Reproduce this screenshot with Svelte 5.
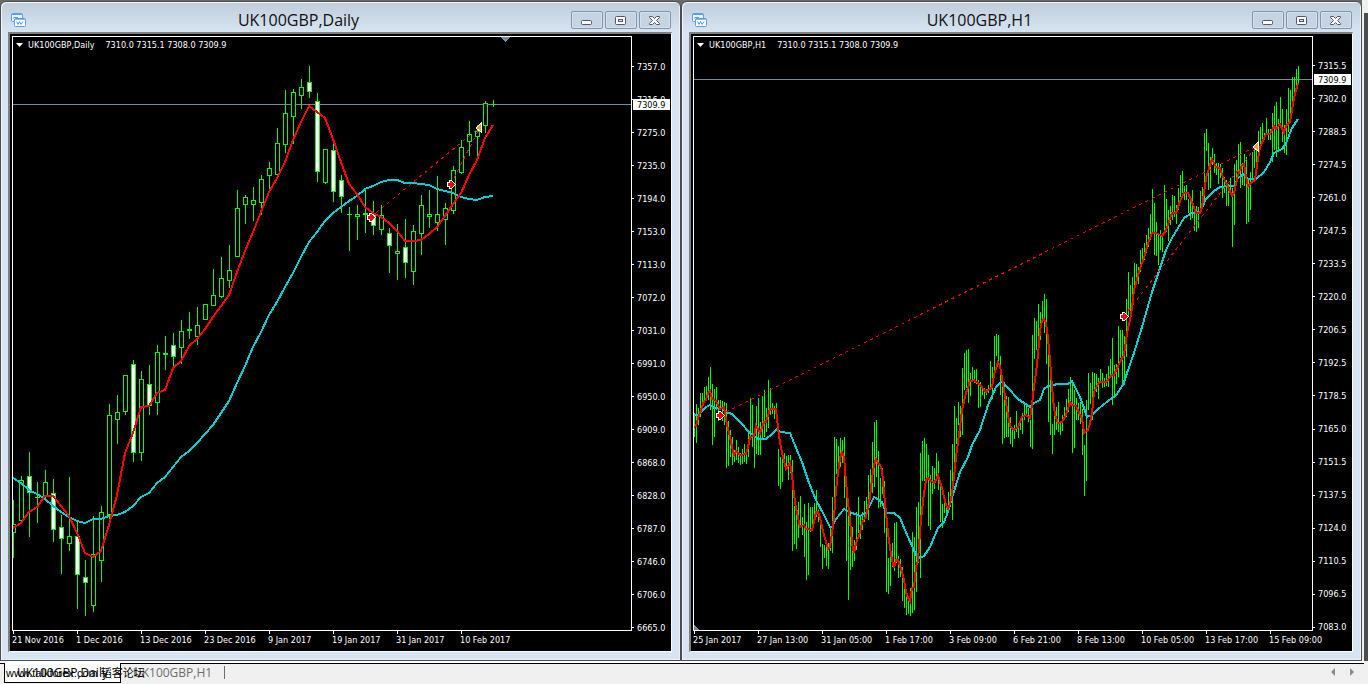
<script>
  // candles: high, body top, body bottom, low, kind (u = hollow, d = filled, x = doji)
  const daily = `500 524 532 558 u,476 480 520 522 u,452 476 492 537 d,482 497 497 523 x,470 482 496 498 u,
    479 493 529 542 d,515 527 538 574 d,477 536 543 551 u,522 536 574 609 d,560 577 582 616 d,
    516 554 605 612 u,506 512 560 582 u,404 415 514 520 u,395 412 419 444 u,375 375 411 415 u,
    360 364 452 462 d,371 379 452 461 u,365 384 405 415 d,345 352 402 415 u,336 353 354 370 x,
    333 345 356 368 d,320 331 347 364 u,312 329 330 339 x,307 325 336 345 u,304 304 319 320 u,
    269 295 305 306 u,257 278 296 298 u,245 270 280 288 u,190 208 256 257 u,195 197 204 224 u,
    187 200 204 221 u,175 179 202 215 u,162 168 175 190 u,128 143 174 175 u,90 113 144 153 u,
    89 92 116 144 u,79 87 95 109 u,66 82 91 98 d,93 101 171 182 d,149 149 182 184 u,
    144 150 191 202 d,175 180 196 213 d,207 214 214 251 x,205 214 216 240 u,190 213 214 233 x,
    201 213 225 235 d,205 215 229 235 u,228 233 245 273 d,224 251 253 280 u,219 247 262 278 d,
    225 231 271 285 u,195 205 233 255 u,190 214 216 228 u,176 214 222 231 u,203 208 219 245 u,
    166 170 210 214 u,140 147 172 174 u,121 134 141 156 u,125 131 136 156 u,101 103 125 133 u,
    100 104 104 107 x`
    .split(',')
    .map((row, i) => {
      const [high, top, bottom, low, kind] = row.trim().split(' ');
      return { x: 13 + i * 8, high: +high, top: +top, bottom: +bottom, low: +low, kind };
    });

  const dailyFast = [
    528, 523, 512, 507, 496, 496, 506, 516, 533, 553, 557, 551, 525, 495, 453, 433, 407, 406, 393, 390, 368,
    361, 346, 339, 329, 317, 306, 295, 272, 251, 232, 212, 192, 178, 162, 140, 122, 106, 112, 118, 139, 162,
    184, 194, 207, 213, 217, 223, 231, 241, 241, 240, 234, 227, 216, 204, 193, 175, 160, 138, 125
  ];
  const dailySlow = [
    478, 483, 490, 494, 499, 506, 512, 517, 521, 523, 519, 519, 516, 515, 512, 506, 497, 493, 483, 477, 467,
    457, 451, 443, 434, 425, 413, 401, 383, 366, 347, 332, 315, 302, 287, 273, 257, 242, 232, 221, 213, 207,
    201, 196, 189, 186, 182, 180, 180, 183, 183, 184, 185, 189, 191, 193, 197, 199, 200, 197, 196
  ];

  // hourly bars: high-low, one every two pixels
  const hourly = `413-437 404-443 408-425 393-417 393-408 387-403 386-400 377-400 367-410 384-445 389-437 387-410
    400-421 400-410 401-421 402-425 403-468 421-466 430-457 437-465 450-462 440-460 447-463 453-465 449-464
    444-462 453-464 430-457 398-437 405-447 428-468 406-454 398-455 422-455 396-438 390-437 408-432 380-428
    388-415 403-414 406-419 403-422 449-486 457-489 459-482 453-467 456-467 455-480 455-473 460-551 506-544
    507-549 502-538 496-527 517-535 504-557 522-580 503-575 507-532 507-528 503-523 490-517 510-522 517-547
    544-569 545-558 543-566 543-569 527-551 497-553 437-523 439-474 446-468 438-467 440-463 437-498 490-561
    500-600 512-570 527-567 540-561 512-550 497-533 515-539 512-530 501-522 497-518 475-520 469-493 442-493
    422-487 420-477 451-508 478-507 468-494 481-533 510-592 558-594 550-586 543-567 523-571 522-563 556-578
    559-577 567-601 580-608 597-615 597-614 588-616 532-613 537-610 507-592 502-563 453-578 441-481 438-481
    444-483 455-526 475-530 466-494 468-489 453-480 461-490 480-522 504-528 503-513 503-513 492-510 470-507
    444-520 406-466 418-444 402-425 406-437 368-435 353-390 350-388 349-403 373-396 367-382 370-383 369-384
    380-408 382-407 386-395 388-399 389-395 385-393 361-390 367-399 336-377 334-356 335-362 356-395 385-444
    385-438 396-437 397-437 417-444 427-447 425-439 411-432 423-438 420-430 413-434 405-420 404-417 408-422
    413-447 335-449 318-359 321-350 304-353 312-340 301-323 294-333 299-364 354-422 370-435 424-454 415-435
    407-430 402-432 423-435 415-431 407-420 399-417 389-412 377-405 381-453 390-448 398-420 403-420 402-424
    409-455 445-496 400-481 373-410 383-404 372-420 373-395 374-392 378-399 369-383 373-388 378-387 374-386
    366-387 359-378 338-405 365-398 364-384 326-377 330-358 330-383 336-385 299-357 272-317 285-312 277-300
    263-290 264-285 267-284 250-272 248-263 243-260 235-253 228-247 214-240 189-234 203-255 222-256 233-265
    230-250 233-252 185-233 199-232 210-241 206-225 195-220 196-217 205-224 188-210 175-197 171-193 186-200
    185-200 199-213 200-220 190-218 210-231 206-232 207-228 191-213 187-205 133-200 129-151 143-190 157-188
    148-165 154-173 163-175 163-184 164-178 168-198 177-193 180-206 184-206 178-193 188-247 164-225 160-183
    144-177 142-188 163-185 154-186 157-224 180-222 172-210 152-182 150-168 145-163 131-160 127-150 123-142
    133-140 118-135 129-140 129-140 113-162 106-150 102-157 119-150 97-125 109-142 125-153 109-155 88-132
    90-122 77-108 77-93 69-85 66-85`
    .trim()
    .split(/\s+/)
    .map((pair, i) => {
      const [high, low] = pair.split('-').map(Number);
      return { x: 694 + i * 2, high, low };
    });

  const hourlyFast = `694,427 696,426 698,418 700,413 702,407 704,401 706,400 708,393 710,391 712,399 716,401 720,409
    724,407 726,420 728,429 730,437 732,447 734,455 736,451 740,455 746,454 748,447 750,437 754,436 756,426
    758,429 760,433 764,422 766,422 770,409 776,409 778,428 780,442 782,453 786,469 790,463 792,475 794,495
    796,508 800,527 804,525 806,529 812,530 814,522 816,512 818,512 820,518 824,535 828,549 830,547 832,533
    834,517 836,490 838,473 840,458 842,452 844,457 846,482 848,503 850,520 852,543 854,553 856,543 860,533
    862,522 866,517 868,507 870,497 872,478 874,465 876,459 878,463 880,465 882,470 884,493 886,513 888,533
    890,548 892,560 894,568 896,560 898,560 902,572 904,580 906,592 908,598 910,601 912,588 914,587 916,567
    918,560 920,532 922,510 924,493 926,480 928,478 930,480 934,483 936,480 938,475 940,482 942,488 944,497
    946,505 948,509 950,504 952,493 954,477 956,457 958,442 960,428 962,410 966,393 968,388 970,380 972,381
    974,380 980,385 986,392 992,387 994,375 998,362 1000,366 1004,390 1008,415 1010,426 1014,430 1018,427
    1022,417 1026,415 1030,418 1032,405 1034,387 1036,372 1038,355 1040,330 1042,321 1044,319 1046,323
    1048,338 1050,360 1052,387 1054,408 1056,418 1058,423 1062,422 1066,415 1070,402 1072,405 1076,406
    1080,415 1082,418 1084,433 1088,430 1090,423 1092,413 1094,392 1098,384 1100,382 1106,382 1112,375
    1114,375 1120,362 1124,355 1126,340 1128,328 1130,320 1132,308 1134,290 1136,283 1140,268 1144,258
    1148,243 1152,233 1156,233 1162,236 1166,230 1172,213 1176,213 1180,201 1184,193 1188,193 1192,202
    1196,213 1200,213 1202,207 1204,193 1206,178 1210,165 1212,159 1216,167 1220,168 1222,175 1228,187
    1232,196 1234,193 1238,175 1242,165 1244,164 1246,177 1248,186 1252,182 1255,180 1257,165 1260,147
    1266,134 1270,134 1274,126 1276,129 1280,124 1284,133 1286,126 1290,122 1294,98 1298,83`;
  const hourlySlow = `694,415 698,415 706,407 710,405 714,408 718,408 722,408 726,412 732,414 740,422 750,433 758,439
    766,439 772,434 777,429 780,432 790,433 794,443 802,462 808,480 816,500 824,515 830,527 832,527 836,519
    844,509 852,513 860,516 866,513 874,497 882,502 886,513 894,513 900,518 908,537 916,555 920,558 924,556
    930,547 938,528 944,522 948,512 952,498 960,472 968,457 972,445 980,430 988,405 996,387 1002,381
    1008,388 1018,399 1030,407 1034,403 1040,400 1044,389 1048,386 1058,384 1068,384 1072,381 1080,397
    1084,408 1087,417 1092,415 1098,409 1108,401 1116,395 1123,385 1127,373 1134,353 1142,327 1152,292
    1160,268 1166,250 1172,238 1178,228 1184,218 1192,213 1200,212 1206,199 1214,191 1220,187 1228,186
    1234,186 1238,178 1244,174 1248,179 1256,179 1264,172 1270,162 1274,153 1282,149 1286,143 1292,128
    1298,119`;

  const toPoints = (ys) => ys.map((y, i) => `${13 + i * 8},${y}`).join(' ');

  const quotes = '7310.0 7315.1 7308.0 7309.9';

  const charts = [
    {
      id: 'daily',
      symbol: 'UK100GBP,Daily',
      left: 13,
      priceY: 104,
      fast: toPoints(dailyFast),
      slow: toPoints(dailySlow),
      trades: [
        [371, 217, 480, 127],
        [451, 184, 480, 127]
      ],
      prices: ['7357.0', '7316.0', '7275.0', '7235.0', '7194.0', '7153.0', '7113.0', '7072.0', '7031.0', '6991.0',
        '6950.0', '6909.0', '6868.0', '6828.0', '6787.0', '6746.0', '6706.0', '6665.0'],
      times: ['21 Nov 2016', '1 Dec 2016', '13 Dec 2016', '23 Dec 2016', '9 Jan 2017', '19 Jan 2017', '31 Jan 2017',
        '10 Feb 2017']
    },
    {
      id: 'hourly',
      symbol: 'UK100GBP,H1',
      left: 694,
      priceY: 79,
      fast: hourlyFast,
      slow: hourlySlow,
      trades: [
        [720, 415, 1257, 146],
        [1124, 316, 1257, 146]
      ],
      prices: ['7315.5', '7302.0', '7288.5', '7274.5', '7261.0', '7247.5', '7233.5', '7220.0', '7206.5', '7192.5',
        '7178.5', '7165.0', '7151.5', '7137.5', '7124.0', '7110.5', '7096.5', '7083.0'],
      times: ['25 Jan 2017', '27 Jan 13:00', '31 Jan 05:00', '1 Feb 17:00', '3 Feb 09:00', '6 Feb 21:00',
        '8 Feb 13:00', '10 Feb 05:00', '13 Feb 17:00', '15 Feb 09:00']
    }
  ];
</script>

<div class="terminal">
  <main class="workspace">
    {#each charts as chart}
      <section class="window">
        <header class="titlebar">
          <svg class="app-icon" width="15" height="15" viewBox="0 0 15 15" aria-hidden="true">
            <rect x="0.5" y="0.5" width="11" height="8" rx="1" fill="#eef5fd" stroke="#5b9be8" />
            <path d="M1 1.500h10" stroke="#5b9be8" />
            <path d="M2 5h1l1-1 1 1 1-1 1 1" fill="none" stroke="#5b9be8" />
            <rect x="3.500" y="5.500" width="11" height="8" rx="1" fill="#fff" stroke="#5b9be8" />
            <path d="M4 6.500h10" stroke="#8bb9ef" />
            <path d="M5.500 8.500l1.500 3 1.500-3 1.500 3 2-3" fill="none" stroke="#5b9be8" />
          </svg>
          <h1>{chart.symbol}</h1>
          <div class="controls">
            <button type="button" aria-label="Minimize">
              <svg width="13" height="11" viewBox="0 0 13 11">
                <rect x="1.500" y="5.500" width="10" height="4" rx="1" fill="#fff" stroke="#53566b" />
              </svg>
            </button>
            <button type="button" aria-label="Restore">
              <svg width="13" height="11" viewBox="0 0 13 11">
                <rect x="1.500" y="1.500" width="10" height="8" rx="1" fill="#fff" stroke="#53566b" />
                <rect x="4.500" y="4.500" width="4" height="2" fill="#dce6f1" stroke="#53566b" />
              </svg>
            </button>
            <button type="button" aria-label="Close">
              <svg width="13" height="11" viewBox="0 0 13 11">
                <path
                  d="M1.500 1.500h3l2 2 2-2h3v1l-3 3 3 3v1h-3l-2-2-2 2h-3v-1l3-3-3-3z"
                  fill="#fff"
                  stroke="#53566b"
                />
              </svg>
            </button>
          </div>
        </header>

        <div class="chart">
          <div class="plot">
            <p class="legend">
              <svg width="7" height="4" viewBox="0 0 7 4" aria-hidden="true"><path d="M0 0h7l-3.500 4z" fill="#fff" /></svg>
              <span>{chart.symbol}</span>
              <span class="quotes">{quotes}</span>
            </p>
            <svg class="canvas" viewBox="{chart.left} 37 618 593" preserveAspectRatio="none" role="img" aria-label={chart.symbol}>
              <rect x={chart.left} y={chart.priceY} width="618" height="1" fill="#778899" />
              {#if chart.id === 'daily'}
                <path d="M501 37h9l-4.500 5z" fill="#778899" />
                {#each daily as c}
                  <rect x={c.x} y={c.high} width="1" height={c.low - c.high} fill="#0f0" />
                  {#if c.kind === 'x'}
                    <rect x={c.x - 2} y={c.top} width="5" height={c.bottom - c.top + 1} fill="#0f0" />
                  {:else}
                    <rect
                      x={c.x - 1.5}
                      y={c.top + 0.5}
                      width="4"
                      height={c.bottom - c.top}
                      fill={c.kind === 'd' ? '#fff' : '#000'}
                      stroke="#0f0"
                    />
                  {/if}
                {/each}
              {:else}
                <path d="M694 625v5h5z" fill="#778899" />
                {#each hourly as bar}
                  <rect x={bar.x} y={bar.high} width="1" height={bar.low - bar.high} fill="#0f0" />
                {/each}
              {/if}
              <polyline class="average slow" points={chart.slow} />
              <polyline class="average fast" points={chart.fast} />
              {#each chart.trades as [x1, y1, x2, y2]}
                <line class="trade" {x1} {y1} {x2} {y2} />
                <path d="M{x1 - 4} {y1 - 2}h2v-2h2l5 4.500-5 4.500h-2v-2h-2z" fill="#fff" />
                <path d="M{x1 - 3} {y1 - 1}h2v-2h1l3.500 3.500-3.500 3.500h-1v-2h-2z" fill="#f00" />
                <path d="M{x2 - 4} {y2 + 1}l5-5v9z" fill="#daa520" stroke="#fff" stroke-width="1" />
              {/each}
            </svg>
          </div>
          <ul class="prices {chart.id}">
            {#each chart.prices as price}
              <li>{price}</li>
            {/each}
            <li class="current">7309.9</li>
          </ul>
          <ul class="times">
            {#each chart.times as time}
              <li>{time}</li>
            {/each}
          </ul>
        </div>
      </section>
    {/each}
    <div class="gutter"></div>
  </main>

  <nav class="tabs">
    <a class="tab active" href="#daily">UK100GBP,Daily</a>
    <a class="tab" href="#hourly">UK100GBP,H1</a>
    <span class="divider"></span>
    <span class="watermark">www.talkforex.com 韬客论坛</span>
    <div class="scroller">
      <button type="button" aria-label="Scroll tabs left">
        <svg width="4" height="8" viewBox="0 0 4 8"><path d="M4 0v8L0 4z" fill="#8a8a8a" /></svg>
      </button>
      <button type="button" aria-label="Scroll tabs right">
        <svg width="4" height="8" viewBox="0 0 4 8"><path d="M0 0v8l4-4z" fill="#8a8a8a" /></svg>
      </button>
    </div>
  </nav>
</div>

<style>
  :global(body) {
    margin: 0;
    background: #f0f0f0;
  }

  .terminal {
    display: flex;
    flex-direction: column;
    height: 100vh;
    min-height: 400px;
    overflow: hidden;
    font-family: 'Open Sans', 'Noto Sans CJK SC', sans-serif;
  }

  .workspace {
    flex: 1;
    min-height: 0;
    display: grid;
    grid-template-columns: 1fr 1fr 6px;
    background: #6b6b66;
  }

  .window {
    box-sizing: border-box;
    display: flex;
    flex-direction: column;
    min-width: 0;
    min-height: 0;
    margin-top: 1px;
    padding: 0 8px 8px 7px;
    border: 1px solid #4c4c50;
    border-radius: 6px 6px 0 0;
    background: linear-gradient(#bfcddb, #d7e4f2 30px);
    box-shadow: inset 1px 1px 0 #f2f7fc, inset -1px -1px 0 #e9f1f9;
  }

  .titlebar {
    display: flex;
    align-items: center;
    height: 30px;
    padding: 6px 1px 0 3px;
    box-sizing: border-box;
    flex: none;
  }

  .app-icon {
    flex: none;
  }

  h1 {
    flex: 1;
    margin: 0;
    text-align: center;
    font-size: 16px;
    line-height: 20px;
    font-weight: 400;
    color: #111;
  }

  .controls {
    display: flex;
    gap: 2px;
  }

  .controls button {
    display: flex;
    align-items: center;
    justify-content: center;
    width: 32px;
    height: 18px;
    padding: 0 2px 0 0;
    border: 1px solid #8492b0;
    border-radius: 2px;
    background: #c5d3e2;
    box-shadow: inset 0 0 0 1px #d6e1ec;
  }

  .chart {
    flex: 1;
    min-height: 0;
    display: grid;
    grid-template-columns: 1fr 39px;
    grid-template-rows: 1fr 20px;
    padding: 2px 0 0 2px;
    border: solid #fff;
    border-width: 2px 1px 1px 2px;
    border-top-color: #7f7f7f;
    border-left-color: #7f7f7f;
    background: #000;
    color: #fff;
    font-family: 'DejaVu Sans Condensed', 'DejaVu Sans', sans-serif;
    font-size: 9px;
    line-height: 12px;
  }

  .plot {
    position: relative;
    border: 1px solid #fff;
    min-height: 0;
    min-width: 0;
  }

  .canvas {
    display: block;
    width: 100%;
    height: 100%;
    shape-rendering: crispEdges;
  }

  .legend {
    position: absolute;
    top: 2px;
    left: 3px;
    display: flex;
    align-items: center;
    gap: 5px;
    margin: 0;
    white-space: nowrap;
  }

  .quotes {
    margin-left: 6px;
  }

  .average {
    fill: none;
    stroke-width: 2;
  }

  .slow {
    stroke: #00ced1;
  }

  .fast {
    stroke: #f00;
  }

  .trade {
    stroke: #f00;
    stroke-dasharray: 3 4;
  }

  ul {
    margin: 0;
    padding: 0;
    list-style: none;
  }

  .prices {
    position: relative;
    grid-column: 2;
    grid-row: 1 / 3;
    display: flex;
    flex-direction: column;
    justify-content: space-between;
    padding: 25px 0 18px;
  }

  .prices.hourly {
    padding-top: 24px;
  }

  .prices li {
    display: flex;
    align-items: center;
    height: 11px;
  }

  .prices li::before {
    content: '';
    width: 2px;
    height: 1px;
    margin-right: 3px;
    background: #fff;
  }

  .prices .current {
    position: absolute;
    left: 1px;
    top: 63px;
    width: 37px;
    background: #fff;
    color: #000;
  }

  .prices.hourly .current {
    top: 38px;
  }

  .prices .current::before {
    margin-right: 2px;
  }

  .times {
    grid-column: 1;
    grid-row: 2;
    display: flex;
  }

  .times li {
    position: relative;
    flex: 0 0 calc(100% * 64 / 620);
    padding-top: 3px;
    white-space: nowrap;
  }

  .times li::before {
    content: '';
    position: absolute;
    top: 0;
    left: 1px;
    width: 1px;
    height: 3px;
    background: #fff;
  }

  .gutter {
    border-left: 2px solid #f0f0f0;
    background: linear-gradient(#f0f0f0, #f0f0f0) 0 0 / 100% 13px no-repeat #4d4d4d;
  }

  .tabs {
    position: relative;
    box-sizing: border-box;
    flex: none;
    display: flex;
    align-items: flex-start;
    height: 23px;
    margin-right: 4px;
    padding-left: 4px;
    border-top: 2px solid #fff;
    background: linear-gradient(#000, #000) 0 0 / 100% 1px no-repeat #f0f0f0;
    font-size: 12px;
    line-height: 18px;
  }

  .tab {
    padding: 1px 12px 0;
    color: #6d6d6d;
    text-decoration: none;
    white-space: nowrap;
  }

  .tab.active {
    border: 1px solid #000;
    border-top: 0;
    background: #fff;
    color: #000;
  }

  .divider {
    width: 1px;
    height: 13px;
    margin-top: 3px;
    background: #6d6d6d;
  }

  .watermark {
    position: absolute;
    left: 6px;
    top: 1px;
    color: #000;
    font-family: 'Liberation Sans', 'Noto Sans CJK SC', sans-serif;
    font-size: 11px;
    white-space: nowrap;
  }

  .scroller {
    display: flex;
    gap: 15px;
    margin: 5px 10px 0 auto;
  }

  .scroller button {
    display: flex;
    padding: 0;
    border: 0;
    background: none;
  }
</style>
